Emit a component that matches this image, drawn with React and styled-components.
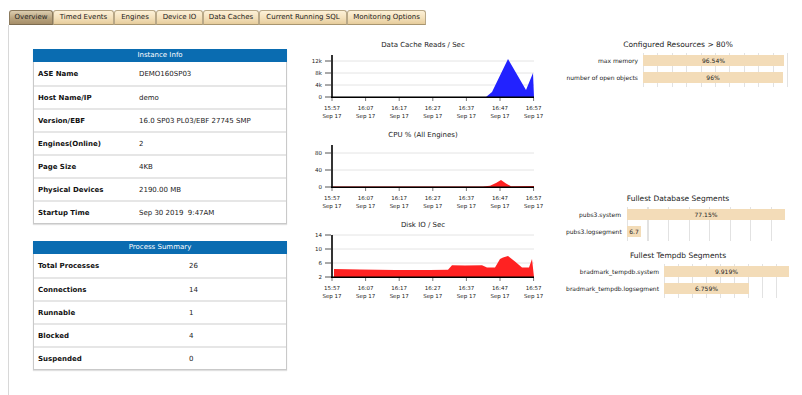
import React from "react";
import styled, { createGlobalStyle } from "styled-components";

const GlobalStyle = createGlobalStyle`
  html, body {
    margin: 0;
    padding: 0;
    background: #fff;
  }
  body {
    font-family: "DejaVu Sans", Verdana, sans-serif;
    color: #222;
  }
`;

const tabs = [
  ["Overview", 44],
  ["Timed Events", 61],
  ["Engines", 42],
  ["Device IO", 47],
  ["Data Caches", 56],
  ["Current Running SQL", 88],
  ["Monitoring Options", 79],
];

const instanceInfo = [
  ["ASE Name", "DEMO160SP03"],
  ["Host Name/IP", "demo"],
  ["Version/EBF", "16.0 SP03 PL03/EBF 27745 SMP"],
  ["Engines(Online)", "2"],
  ["Page Size", "4KB"],
  ["Physical Devices", "2190.00 MB"],
  ["Startup Time", "Sep 30 2019  9:47AM"],
];

const processSummary = [
  ["Total Processes", "26"],
  ["Connections", "14"],
  ["Runnable", "1"],
  ["Blocked", "4"],
  ["Suspended", "0"],
];

const times = ["15:57", "16:07", "16:17", "16:27", "16:37", "16:47", "16:57"];

const charts = [
  {
    title: "Data Cache Reads / Sec",
    ticks: [
      ["12k", 9],
      ["8k", 21],
      ["4k", 33],
      ["0", 45],
    ],
    color: "#2222ff",
    points: "32,45 186,45 192,40 208,7 226,38 233,21 234,45",
  },
  {
    title: "CPU % (All Engines)",
    ticks: [
      ["80", 11],
      ["40", 28],
      ["0", 45],
    ],
    color: "#ff2222",
    points:
      "33,45 33,44.4 183,44.4 190,43.8 196,41 201,38 206,41.5 211,44.3 234,44 234,45",
  },
  {
    title: "Disk IO / Sec",
    ticks: [
      ["14", 3],
      ["10", 17],
      ["6", 31],
      ["2", 45],
    ],
    color: "#ff2222",
    points:
      "34,45 34,37 60,37.6 95,38 130,38 148,37.8 152,33.2 165,33.4 182,33.3 187,35.5 195,35.4 200,27 203,25.5 208,24 215,29.6 222,35.5 229,35.5 232,27 234,45",
  },
];

const resourceBars = [
  {
    title: "Configured Resources > 80%",
    labelWidth: 72,
    trackWidth: 146,
    grid: 14.4,
    gap: 5,
    rows: [
      ["max memory", "96.54%", 141],
      ["number of open objects", "96%", 140],
    ],
  },
  {
    title: "Fullest Database Segments",
    labelWidth: 55,
    trackWidth: 160,
    grid: 20.5,
    gap: 6,
    top: 106,
    rows: [
      ["pubs3.system", "77.15%", 158],
      ["pubs3.logsegment", "6.7", 14],
    ],
  },
  {
    title: "Fullest Tempdb Segments",
    labelWidth: 93,
    trackWidth: 126,
    grid: 14,
    gap: 5,
    top: 9,
    rows: [
      ["bradmark_tempdb.system", "9.919%", 125],
      ["bradmark_tempdb.logsegment", "6.759%", 85],
    ],
  },
];

const tickX = (i) => 32 + i * 33.6;

const Chart = ({ chart }) => (
  <ChartBlock>
    <ChartTitle>{chart.title}</ChartTitle>
    <svg width="250" height="76" viewBox="0 0 250 76">
      {chart.ticks.map(([label, y]) => (
        <g key={label}>
          <line x1="32" x2="234" y1={y} y2={y} stroke="#e4e4e4" strokeWidth="1" />
          <line x1="25" x2="31" y1={y} y2={y} stroke="#555" strokeWidth="1" />
          <text x="22" y={y + 2} fontSize="5.5" textAnchor="end" fill="#222">
            {label}
          </text>
        </g>
      ))}
      <polygon points={chart.points} fill={chart.color} />
      <line x1="32" x2="32" y1="3" y2="46" stroke="#000" strokeWidth="1.6" />
      <line x1="31" x2="234" y1="45.3" y2="45.3" stroke="#000" strokeWidth="1.4" />
      {times.map((t, i) => (
        <g key={t}>
          <line
            x1={tickX(i)}
            x2={tickX(i)}
            y1="46"
            y2="49"
            stroke="#777"
            strokeWidth="1"
          />
          <text x={tickX(i)} y="58" fontSize="5.5" textAnchor="middle" fill="#222">
            {t}
          </text>
          <text x={tickX(i)} y="66" fontSize="5.5" textAnchor="middle" fill="#222">
            Sep 17
          </text>
        </g>
      ))}
    </svg>
  </ChartBlock>
);

const InfoTable = ({ title, rows, labelWidth }) => (
  <Table>
    <TableHeader>{title}</TableHeader>
    {rows.map(([label, value]) => (
      <Row key={label}>
        <Label $w={labelWidth}>{label}</Label>
        <Value>{value}</Value>
      </Row>
    ))}
  </Table>
);

const BarChart = ({ chart }) => (
  <BarSection $top={chart.top || 0}>
    <SectionTitle>{chart.title}</SectionTitle>
    <BarBody $gap={chart.gap}>
      <BarLabels $w={chart.labelWidth}>
        {chart.rows.map(([label]) => (
          <BarLabel key={label}>{label}</BarLabel>
        ))}
      </BarLabels>
      <Track $w={chart.trackWidth} $grid={chart.grid}>
        {chart.rows.map(([label, value, width]) => (
          <Bar key={label} $w={width}>
            {value}
          </Bar>
        ))}
      </Track>
    </BarBody>
  </BarSection>
);

export default function App() {
  return (
    <>
      <GlobalStyle />
      <Page>
        <TabBar>
          {tabs.map(([t, w], i) => (
            <Tab key={t} $w={w} $active={i === 0}>
              {t}
            </Tab>
          ))}
        </TabBar>
        <Panel>
          <LeftCol>
            <InfoTable title="Instance Info" rows={instanceInfo} labelWidth={101} />
            <InfoTable title="Process Summary" rows={processSummary} labelWidth={151} />
          </LeftCol>
          <MidCol>
            {charts.map((c) => (
              <Chart key={c.title} chart={c} />
            ))}
          </MidCol>
          <RightCol>
            {resourceBars.map((c) => (
              <BarChart key={c.title} chart={c} />
            ))}
          </RightCol>
        </Panel>
      </Page>
    </>
  );
}

const Page = styled.div`
  padding: 10px 0 0 8px;
  min-height: 100vh;
  box-sizing: border-box;
`;

const TabBar = styled.div`
  display: flex;
  padding-left: 1px;
  height: 15px;
`;

const Tab = styled.div`
  box-sizing: border-box;
  width: ${(p) => p.$w}px;
  height: 15px;
  font-size: 7px;
  line-height: 13px;
  text-align: center;
  color: #222;
  white-space: nowrap;
  border: 1px solid ${(p) => (p.$active ? "#8c7b5e" : "#b9a887")};
  border-bottom-color: ${(p) => (p.$active ? "#7d6c50" : "#a8956f")};
  border-radius: 3px 3px 0 0;
  background: ${(p) =>
    p.$active
      ? "linear-gradient(#dccdb0, #b9a47f 55%, #a58e69)"
      : "linear-gradient(#fdf1d8, #f3e0ba 55%, #e6cc9c)"};
`;

const Panel = styled.div`
  display: flex;
  align-items: flex-start;
  border-left: 1px solid #d8d8d8;
  min-height: calc(100vh - 25px);
  box-sizing: border-box;
  padding: 13px 0 0 24px;
`;

const LeftCol = styled.div`
  width: 254px;
  margin-top: 11px;
  display: flex;
  flex-direction: column;
  gap: 17px;
`;

const Table = styled.div`
  border: 1px solid #c9c9c9;
  border-top: none;
  box-shadow: 0 1px 1px rgba(0, 0, 0, 0.12);
  background: #fff;
`;

const TableHeader = styled.div`
  height: 13px;
  margin: 0 -1px;
  background: #0a6cb1;
  color: #fff;
  font-size: 7px;
  line-height: 13px;
  text-align: center;
`;

const Row = styled.div`
  display: flex;
  align-items: center;
  height: 23px;
  box-sizing: border-box;
  padding-left: 4px;
  font-size: 7px;
  & + & {
    border-top: 2px solid #e6e6e6;
  }
`;

const Label = styled.div`
  width: ${(p) => p.$w}px;
  font-weight: bold;
  color: #111;
`;

const Value = styled.div`
  color: #222;
  white-space: pre;
`;

const MidCol = styled.div`
  width: 250px;
  margin-left: 13px;
  display: flex;
  flex-direction: column;
`;

const ChartBlock = styled.div`
  height: 90px;
  display: flex;
  flex-direction: column;
  svg {
    display: block;
  }
`;

const ChartTitle = styled.div`
  height: 14px;
  line-height: 14px;
  font-size: 7px;
  text-align: center;
  padding-right: 4px;
  color: #222;
`;

const RightCol = styled.div`
  margin-left: 16px;
  margin-top: 1px;
  width: 230px;
  display: flex;
  flex-direction: column;
`;

const BarSection = styled.div`
  margin-top: ${(p) => p.$top}px;
`;

const SectionTitle = styled.div`
  height: 12px;
  line-height: 12px;
  font-size: 7.5px;
  text-align: center;
  padding-right: 6px;
  margin-bottom: 2px;
  color: #222;
`;

const BarBody = styled.div`
  display: flex;
  gap: ${(p) => p.$gap}px;
`;

const BarLabels = styled.div`
  width: ${(p) => p.$w}px;
  padding-top: 2px;
  display: flex;
  flex-direction: column;
  gap: 6px;
`;

const BarLabel = styled.div`
  height: 11px;
  line-height: 11px;
  font-size: 6px;
  text-align: right;
  white-space: nowrap;
  color: #222;
`;

const Track = styled.div`
  width: ${(p) => p.$w}px;
  padding: 2px 0 4px;
  display: flex;
  flex-direction: column;
  gap: 6px;
  background: repeating-linear-gradient(
    to right,
    #e2e2e2 0,
    #e2e2e2 1px,
    transparent 1px,
    transparent ${(p) => p.$grid}px
  );
`;

const Bar = styled.div`
  width: ${(p) => p.$w}px;
  height: 11px;
  line-height: 11px;
  background: #f3dcb8;
  font-size: 6px;
  text-align: center;
  overflow: hidden;
  white-space: nowrap;
  color: #222;
`;
